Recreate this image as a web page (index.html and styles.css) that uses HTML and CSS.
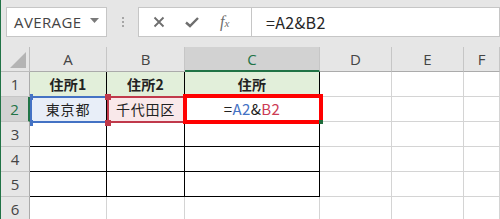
FILE: index.html
```html
<!DOCTYPE html>
<html>
<head>
<meta charset="utf-8">
<title>Excel - 文字列の結合</title>
<link rel="stylesheet" href="styles.css">
</head>
<body>
<div id="app">
    <div class="toolbar">
        <div class="name-box">
            <span class="name-text">AVERAGE</span>
            <svg class="name-arrow" width="9" height="5" viewBox="0 0 9 5"><path d="M0 0 H9 L4.5 5 Z" fill="#7a7a7a"/></svg>
        </div>
        <div class="grip"><i></i><i></i><i></i></div>
        <div class="fx-box">
            <svg class="fx-icon" width="12" height="12" viewBox="0 0 12 12"><path d="M1.5 1.5 L10.5 10.5 M10.5 1.5 L1.5 10.5" stroke="#6e6e6e" stroke-width="1.8" fill="none"/></svg>
            <svg class="fx-icon" width="14" height="12" viewBox="0 0 14 12"><path d="M1 6.5 L5 10 L13 2" stroke="#6e6e6e" stroke-width="2.4" fill="none"/></svg>
            <span class="fx-text">f<sub>x</sub></span>
        </div>
        <div class="formula-box">=A2&amp;B2</div>
    </div>

    <div class="sheet">
        <div class="corner"><svg width="16" height="16" viewBox="0 0 16 16"><path d="M16 0 V16 H0 Z" fill="#b4b4b4"/></svg></div>
        <div class="col-head">A</div>
        <div class="col-head">B</div>
        <div class="col-head active">C</div>
        <div class="col-head">D</div>
        <div class="col-head">E</div>
        <div class="col-head">F</div>

        <div class="row-head">1</div>
        <div class="cell tbl head">住所1</div>
        <div class="cell tbl head">住所2</div>
        <div class="cell tbl head">住所</div>
        <div class="cell"></div>
        <div class="cell"></div>
        <div class="cell"></div>

        <div class="row-head active">2</div>
        <div class="cell tbl ref-fill-a">東京都</div>
        <div class="cell tbl ref-fill-b">千代田区</div>
        <div class="cell tbl formula-cell">=<span class="txt-a">A2</span>&amp;<span class="txt-b">B2</span></div>
        <div class="cell"></div>
        <div class="cell"></div>
        <div class="cell"></div>

        <div class="row-head">3</div>
        <div class="cell tbl"></div>
        <div class="cell tbl"></div>
        <div class="cell tbl"></div>
        <div class="cell"></div>
        <div class="cell"></div>
        <div class="cell"></div>

        <div class="row-head">4</div>
        <div class="cell tbl"></div>
        <div class="cell tbl"></div>
        <div class="cell tbl"></div>
        <div class="cell"></div>
        <div class="cell"></div>
        <div class="cell"></div>

        <div class="row-head">5</div>
        <div class="cell tbl"></div>
        <div class="cell tbl"></div>
        <div class="cell tbl"></div>
        <div class="cell"></div>
        <div class="cell"></div>
        <div class="cell"></div>

        <div class="row-head">6</div>
        <div class="cell"></div>
        <div class="cell"></div>
        <div class="cell"></div>
        <div class="cell"></div>
        <div class="cell"></div>
        <div class="cell"></div>

        <!-- formula reference frames -->
        <div class="ref-box blue"></div>
        <div class="ref-box red"></div>
        <div class="handle blue h-a1"></div>
        <div class="handle blue h-a2"></div>
        <div class="handle red h-b1"></div>
        <div class="handle red h-b2"></div>

        <!-- annotation frame -->
        <div class="mark"></div>
        <div class="fill-handle"></div>
    </div>
</div>
</body>
</html>
```

FILE: styles.css
```css
/* Reset */
* { margin: 0; padding: 0; box-sizing: border-box; }

body {
    background: #ffffff;
    overflow: hidden;
}

#app {
    width: 500px;
    height: 219px;
    border-left: 1px solid #217346;
    overflow: hidden;
    font-family: "Noto Sans CJK JP", "Noto Sans", sans-serif;
}

/* Toolbar */
.toolbar {
    height: 47px;
    background: #e6e6e6;
    display: flex;
    align-items: flex-start;
    padding-top: 7px;
    padding-left: 5px;
}

.name-box {
    width: 101px;
    height: 30px;
    background: #fff;
    border: 1px solid #c6c6c6;
    display: flex;
    align-items: center;
    justify-content: space-between;
    padding: 0 7px 0 7px;
}

.name-text {
    font-family: "Open Sans", sans-serif;
    font-size: 15px;
    letter-spacing: 0.4px;
    color: #444;
}

.name-arrow {
    margin-top: -4px;
}

.grip {
    width: 31px;
    height: 30px;
    display: flex;
    flex-direction: column;
    align-items: center;
    justify-content: center;
    gap: 2px;
}

.grip i {
    display: block;
    width: 2px;
    height: 2px;
    background: #a6a6a6;
}

.fx-box {
    width: 113px;
    height: 30px;
    background: #fff;
    border: 1px solid #c6c6c6;
    border-right: 0;
    display: flex;
    align-items: center;
    padding-left: 14px;
}

.fx-icon { display: block; }
.fx-icon + .fx-icon { margin-left: 20px; }

.fx-text {
    margin-left: 21px;
    font-family: "Liberation Serif", serif;
    font-style: italic;
    font-size: 16px;
    color: #6e6e6e;
    line-height: 1;
}

.fx-text sub {
    font-size: 11px;
    vertical-align: 0;
}

.formula-box {
    flex: 1;
    height: 30px;
    background: #fff;
    border: 1px solid #c6c6c6;
    padding-left: 14px;
    font-size: 16px;
    letter-spacing: 0.3px;
    line-height: 28px;
    color: #262626;
}

/* Sheet grid */
.sheet {
    position: relative;
    display: grid;
    grid-template-columns: 29px 77px 78px 135px 72px 72px 1fr;
    grid-template-rows: repeat(7, 25px);
}

.corner {
    background: #e6e6e6;
    border-right: 1px solid #bdbdbd;
    border-bottom: 1px solid #bdbdbd;
    display: flex;
    align-items: flex-end;
    justify-content: flex-end;
    padding: 0 3px 3px 0;
}

.col-head {
    background: #e6e6e6;
    border-right: 1px solid #c6c6c6;
    border-bottom: 1px solid #ababab;
    font-family: "Open Sans", sans-serif;
    font-size: 15px;
    color: #444;
    text-align: center;
    line-height: 24px;
}

.col-head.active {
    background: #d2d2d2;
    color: #217346;
    border-bottom: 2px solid #217346;
}

.row-head {
    background: #e6e6e6;
    border-right: 1px solid #ababab;
    border-bottom: 1px solid #c6c6c6;
    font-family: "Open Sans", sans-serif;
    font-size: 15px;
    color: #444;
    text-align: center;
    line-height: 24px;
}

.row-head.active {
    background: #d2d2d2;
    color: #217346;
    border-right: 2px solid #217346;
}

.cell {
    border-right: 1px solid #d4d4d4;
    border-bottom: 1px solid #d4d4d4;
    font-size: 14px;
    letter-spacing: 0.8px;
    color: #222;
    text-align: center;
    line-height: 24px;
}

.cell.tbl {
    border-right-color: #000;
    border-bottom-color: #000;
}

.cell.head {
    background: #e2efda;
    font-weight: bold;
    letter-spacing: 0.3px;
}

.formula-cell {
    font-size: 15px;
    letter-spacing: 0.4px;
}

.ref-fill-a { background: #e8eef8; }
.ref-fill-b { background: #f9e8ea; }

.txt-a { color: #4472c4; }
.txt-b { color: #cc3c55; }

/* Formula reference frames */
.ref-box {
    position: absolute;
    top: 49px;
    height: 27px;
    border: 2px solid;
}

.ref-box.blue { left: 29px; width: 79px; border-color: #4472c4; }
.ref-box.red { left: 106px; width: 80px; border-color: #c0394b; }

.handle {
    position: absolute;
    width: 6px;
    height: 6px;
}

.handle.blue { background: #4472c4; width: 3px; left: 29px; }
.handle.red { background: #c0394b; left: 104px; }
.h-a1, .h-b1 { top: 47px; }
.h-a2, .h-b2 { top: 73px; }

/* Annotation frame */
.mark {
    position: absolute;
    left: 182px;
    top: 47px;
    width: 140px;
    height: 30px;
    border: 4px solid #ff0000;
}

.fill-handle {
    position: absolute;
    left: 318px;
    top: 73px;
    width: 4px;
    height: 4px;
    background: #1e6b3a;
}
```
